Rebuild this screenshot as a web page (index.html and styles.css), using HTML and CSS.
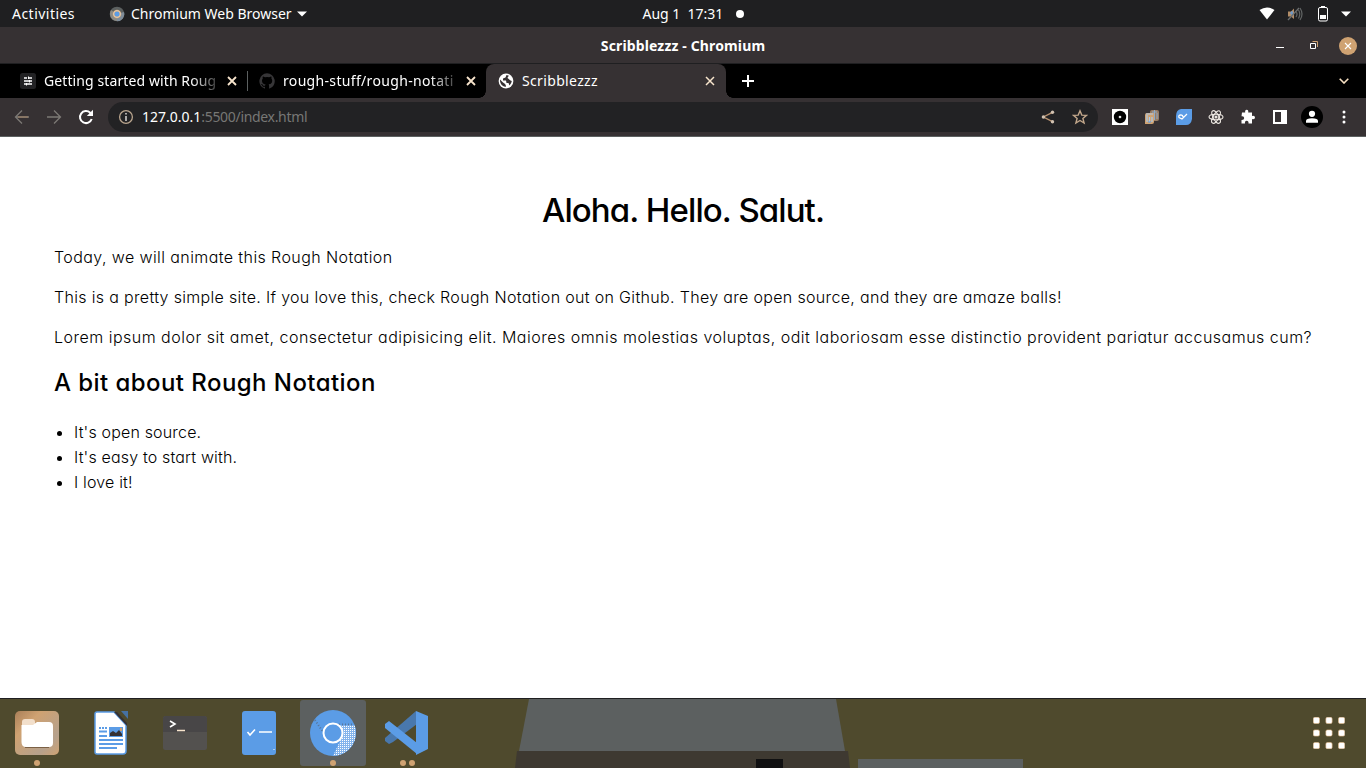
FILE: index.html
```html
<!DOCTYPE html>
<html lang="en">
<head>
<meta charset="utf-8">
<title>Scribblezzz</title>
<link rel="stylesheet" href="styles.css">
</head>
<body>
<div class="desktop">
  <header class="topbar">
    <div class="topbar-left">
      <span class="activities">Activities</span>
      <svg class="app-icon" width="16" height="16" viewBox="0 0 16 16"><circle cx="8" cy="8" r="7.3" fill="#5c6060"/><path d="M8 8L15 6A7.3 7.3 0 0 1 8 15.3Z" fill="#7e8c99"/><path d="M2 4L8 8V15A7.300 7.300 0 0 1 2 4Z" fill="#8d8b86"/><circle cx="8" cy="8" r="4.3" fill="#cfa272"/><circle cx="8" cy="8" r="2.6" fill="#5b9ce6"/><circle cx="8" cy="8" r="3.4" fill="none" stroke="#e3cfba" stroke-width="1"/></svg>
      <span class="app-name">Chromium Web Browser</span>
      <svg class="caret" width="10" height="6" viewBox="0 0 10 6"><path d="M0 .5H10L5 5.5Z" fill="#fff"/></svg>
    </div>
    <div class="clock"><span class="date">Aug 1</span><span class="time">17:31</span><i class="dot"></i></div>
    <div class="tray">
      <svg width="16" height="13" viewBox="0 0 16 13"><path d="M.5 3Q8-2 15.5 3L8 12.5Z" fill="#fff"/></svg>
      <svg class="mute" width="16" height="14" viewBox="0 0 16 14"><path d="M1 4.5H4L7 1.5V12L4 9.5H1Z" fill="#b28d68"/><path d="M3 6H6M5 4V9" stroke="#5b9ce6" stroke-width="1"/><path d="M1 13L12 1" stroke="#6c6f70" stroke-width="1.3"/><path d="M9 4.5Q11 7 9 10M11.5 3Q14 7 11.5 11.5M13 1Q17 7 13 13" fill="none" stroke="#626565" stroke-width="1.2"/></svg>
      <svg class="battery" width="10" height="16" viewBox="0 0 10 16"><path d="M3 0H7V2H3Z" fill="#fff"/><rect x=".5" y="1.5" width="9" height="13.5" rx="1.5" fill="none" stroke="#fff"/><rect x="2" y="9" width="6" height="4" fill="#fff"/></svg>
      <svg class="caret-tray" width="10" height="6" viewBox="0 0 10 6"><path d="M0 .5H10L5 5.5Z" fill="#fff"/></svg>
    </div>
  </header>

  <div class="titlebar">
    <span class="window-title">Scribblezzz - Chromium</span>
    <div class="window-controls">
      <i class="minimize"></i>
      <svg class="restore" width="8" height="9" viewBox="0 0 8 9"><path d="M.5 2.5H5.5V7.5H.5Z" fill="none" stroke="#fff"/><path d="M2.5 .5H7.5V6" fill="none" stroke="#cfa272"/></svg>
      <svg width="18" height="18" viewBox="0 0 18 18"><circle cx="9" cy="9" r="9" fill="#cfa272"/><path d="M6 6L12 12M12 6L6 12" stroke="#fff" stroke-width="1.1"/></svg>
    </div>
  </div>

  <nav class="tabs">
    <div class="tab tab-first">
      <svg class="favicon" width="16" height="16" viewBox="0 0 16 16"><rect width="16" height="16" rx="2.5" fill="#222224"/><path d="M4 5H7M8 5H12M4 8H9M10 8H12M4 11H6M7 11H12" stroke="#fff" stroke-width="1.5"/><path d="M8.500 3.500V6M9.500 7V9.500M6.500 10V12.500" stroke="#fff"/></svg>
      <span class="label label-rough">Getting started with Roug</span>
      <svg class="close" width="10" height="10" viewBox="0 0 10 10"><path d="M1 1L9 9M9 1L1 9" stroke="#f8e5cd" stroke-width="1.8"/></svg>
    </div>
    <div class="tab tab-second">
      <svg class="favicon" width="16" height="16" viewBox="0 0 16 16"><path fill="#363537" d="M8 .3a7.9 7.9 0 0 0-2.5 15.3c.4.1.5-.2.5-.4v-1.4c-2 .4-2.5-.5-2.7-1-.1-.2-.5-.9-.8-1.1-.3-.2-.7-.5 0-.6.6 0 1.1.6 1.3.8.7 1.2 1.8.9 2.3.7.1-.5.3-.9.5-1.1-1.8-.2-3.6-.9-3.6-3.9 0-.9.3-1.6.8-2.1-.1-.2-.4-1 .1-2.1 0 0 .7-.2 2.2.8a7.5 7.5 0 0 1 4 0c1.5-1 2.2-.8 2.2-.8.4 1.1.2 1.9.1 2.1.5.6.8 1.3.8 2.1 0 3.1-1.9 3.7-3.6 3.9.3.3.5.7.5 1.5v2.2c0 .2.1.5.5.4A7.9 7.9 0 0 0 8 .3Z"/></svg>
      <span class="label label-github">rough-stuff/rough-notati</span>
      <svg class="close" width="10" height="10" viewBox="0 0 10 10"><path d="M1 1L9 9M9 1L1 9" stroke="#f8e5cd" stroke-width="1.8"/></svg>
    </div>
    <div class="tab tab-active">
      <svg class="favicon globe" width="16" height="16" viewBox="0 0 16 16"><circle cx="8" cy="8" r="7.4" fill="#fff"/><path d="M8.5 2L11 2.7Q9.5 4 9.5 5L12.5 7.5 13.8 8Q13.5 10.5 11.5 12.5L10.5 10H8.5L8 7.5H5V5.5L7.5 4.5ZM2 6.5L5 9.5 6.5 10.5 7.8 12V14Q2.5 13 2 8Z" fill="#363133"/></svg>
      <span class="label label-active">Scribblezzz</span>
      <svg class="close" width="10" height="10" viewBox="0 0 10 10"><path d="M1 1L9 9M9 1L1 9" stroke="#f8e5cd" stroke-width="1.5"/></svg>
    </div>
    <svg class="new-tab" width="12" height="12" viewBox="0 0 12 12"><path d="M6 0V12M0 6H12" stroke="#fff" stroke-width="2"/></svg>
    <svg class="tab-search" width="10" height="6" viewBox="0 0 10 6"><path d="M.7 .7L5 5L9.3 .7" fill="none" stroke="#f8e0c2" stroke-width="1.6"/></svg>
  </nav>

  <div class="toolbar">
    <svg class="nav-icon" width="16" height="16" viewBox="0 0 16 16"><path d="M15 8H2M8 1.5L1.5 8L8 14.5" fill="none" stroke="#7c7975" stroke-width="1.3"/><path d="M4 8H14" stroke="#a58567"/></svg>
    <svg class="nav-icon forward" width="16" height="16" viewBox="0 0 16 16"><path d="M1 8H14M8 1.5L14.5 8L8 14.5" fill="none" stroke="#7c7975" stroke-width="1.3"/></svg>
    <svg class="nav-icon reload" width="16" height="16" viewBox="0 0 16 16"><path d="M13.7 10A6 6 0 1 1 12.2 3.8L13.5 5" fill="none" stroke="#fff" stroke-width="2"/><path d="M15 .8V7H8.8Z" fill="#fff"/></svg>
    <div class="omnibox">
      <svg width="16" height="16" viewBox="0 0 16 16"><circle cx="8" cy="8" r="6.4" fill="none" stroke="#b9a58e" stroke-width="1.3"/><path d="M8 7V12M8 4V5.6" stroke="#d9d6d2" stroke-width="1.5"/></svg>
      <span class="url"><span class="host">127.0.0.1</span><span class="path">:5500/index.html</span></span>
      <svg class="share" width="14" height="14" viewBox="0 0 14 14"><path d="M11.5 2.3L2.5 7L11.5 11.7" fill="none" stroke="#b99370" stroke-width="1.4"/><g fill="#d2c2b1"><circle cx="11.5" cy="2.3" r="1.7"/><circle cx="11.5" cy="11.7" r="1.7"/><circle cx="2.4" cy="7" r="1.7"/></g></svg>
      <svg class="star" width="16" height="16" viewBox="0 0 16 16"><path d="M8 1.8L9.8 6.1 14.5 6.4 10.9 9.4 12.1 14 8 11.5 3.9 14 5.1 9.4 1.5 6.4 6.2 6.1Z" fill="none" stroke="#c2a78b" stroke-width="1.4"/></svg>
    </div>
    <div class="extensions">
      <svg width="16" height="16" viewBox="0 0 16 16"><path d="M0 0H16V16H0Z" fill="#fff"/><circle cx="8" cy="8" r="6.2" fill="#000"/><circle cx="8" cy="8" r="1.300" fill="#fff"/><circle cx="8" cy="8" r=".4" fill="#000"/></svg>
      <svg width="16" height="16" viewBox="0 0 16 16"><path d="M6 3Q6 1 8 1H13Q15 1 15 3V10Q15 12 13 12H6Z" fill="#987c63"/><path d="M8 3H13M10.500 1V11M13 4V10" stroke="#8eaac7"/><path d="M1 6Q1 4 3 4H10V13Q10 15 8 15H1Z" fill="#cfa272"/><path d="M3 6V13M5.500 8V13M8 8V13M2 5H9" stroke="#a9c8e8" stroke-width="1.2" fill="none"/><path d="M4 13H7" stroke="#5b9ce6"/></svg>
      <svg width="16" height="16" viewBox="0 0 16 16"><path d="M5 0H16V10Q15 16 10 16H0V7Q0 1 5 0Z" fill="#5b9ce6"/><path d="M11 5L6 10L3 8.500Q2 6 5 5.8Q7 6 7 8" fill="none" stroke="#fff" stroke-width="1.2"/></svg>
      <svg width="16" height="16" viewBox="0 0 16 16" fill="none" stroke="#eee9e3" stroke-width="1.1"><ellipse cx="8" cy="8" rx="7" ry="2.8"/><ellipse cx="8" cy="8" rx="7" ry="2.8" transform="rotate(60 8 8)"/><ellipse cx="8" cy="8" rx="7" ry="2.8" transform="rotate(120 8 8)"/><circle cx="8" cy="8" r="1" fill="#fff"/></svg>
      <svg width="16" height="16" viewBox="0 0 16 16"><path d="M2 3.5H5.2Q4.7 .8 6.7.8T8.2 3.5H12V7Q15 6.3 15 8.5T12 10V14.5H8.5Q8.8 11.7 6.7 11.7T5 14.5H1.5V11Q4.2 11.2 4.2 9T1.5 7.2Z" fill="#fff"/></svg>
      <svg width="16" height="16" viewBox="0 0 16 16"><path d="M1 1H15V15H1Z" fill="#fff"/><path d="M3 3H9V13H3Z" fill="#363133"/></svg>
    </div>
    <svg class="profile" width="22" height="22" viewBox="0 0 22 22"><circle cx="11" cy="11" r="11" fill="#000"/><circle cx="11" cy="7.8" r="3.1" fill="#fff"/><path d="M5 16.7V15Q5 12.2 11 12.2T17 15V16.7Z" fill="#fff"/></svg>
    <svg class="menu" width="4" height="14" viewBox="0 0 4 14" fill="#fff"><circle cx="2" cy="2" r="1.5"/><circle cx="2" cy="7" r="1.5"/><circle cx="2" cy="12" r="1.5"/></svg>
  </div>

  <main class="page">
    <h1>Aloha. Hello. Salut.</h1>
    <p class="intro">Today, we will animate this Rough Notation</p>
    <p class="about">This is a pretty simple site. If you love this, check Rough Notation out on Github. They are open source, and they are amaze balls!</p>
    <p class="lorem">Lorem ipsum dolor sit amet, consectetur adipisicing elit. Maiores omnis molestias voluptas, odit laboriosam esse distinctio provident pariatur accusamus cum?</p>
    <h2>A bit about Rough Notation</h2>
    <ul>
      <li>It's open source.</li>
      <li>It's easy to start with.</li>
      <li>I love it!</li>
    </ul>
  </main>

  <footer class="dock">
    <svg class="wallpaper" width="1366" height="69" viewBox="0 0 1366 69"><path d="M529 0H820L836 0L845 52H519Z" fill="#5c6060"/><path d="M517 52H848L850 69H515Z" fill="#3e3931"/><path d="M756 60H783V69H756Z" fill="#101011"/><path d="M858 60H1023V69H858Z" fill="#5c6060"/></svg>
    <div class="launcher">
      <svg width="44" height="44" viewBox="0 0 44 44"><defs><linearGradient id="files" x1="0" y1="0" x2="1" y2="1"><stop offset="0" stop-color="#a97f58"/><stop offset=".3" stop-color="#cfa272"/><stop offset=".75" stop-color="#b6a18c"/><stop offset="1" stop-color="#cfa272"/></linearGradient></defs><rect width="44" height="44" rx="5" fill="url(#files)"/><path d="M7 11Q7 8 10 8H17Q20 8 20 11V14H7Z" fill="#f2dfcb"/><path d="M6.500 14H18L22 11H34Q38 11 38 15V32Q38 36 34 36H11Q6.500 36 6.500 31Z" fill="#fff"/><path d="M10 36.500H34" stroke="#7b6045"/></svg>
      <i class="running"></i>
    </div>
    <div class="launcher">
      <svg width="36" height="44" viewBox="0 0 36 44"><path d="M4 1H21L33 14V40Q33 43 30 43H4Q2 43 2 41V3Q2 1 4 1Z" fill="#fff" stroke="#5b9ce6" stroke-width="1.500"/><path d="M21 1L34 15V12L24 1Z" fill="#363133"/><path d="M28 0H35V8Z" fill="#4671a3"/><g stroke="#5b9ce6" stroke-width="2"><path d="M6 17H14" stroke-dasharray="2 1"/><path d="M6 20.500H14M6 25H14M6 29H30M6 33H30M6 37H24"/></g><path d="M16 16H30V26H16Z" fill="#5b9ce6"/><path d="M17 25V22L20 20L23 22L26 19L29 23V25Z" fill="#363133"/><path d="M27 17H29V20H27Z" fill="#cfa272"/></svg>
    </div>
    <div class="launcher">
      <svg width="46" height="36" viewBox="0 0 46 36"><rect x="1" y="1" width="44" height="34" rx="2.500" fill="#53514f"/><path d="M1 4Q1 1 4 1H42Q45 1 45 4V17H1Z" fill="#484647"/><path d="M8 6L13 9L8 12" fill="none" stroke="#fff" stroke-width="1.600"/><path d="M15 15.500H23" stroke="#f8e5cd" stroke-width="1.500"/></svg>
    </div>
    <div class="launcher">
      <svg width="34" height="44" viewBox="0 0 34 44"><rect width="34" height="44" rx="3" fill="#5b9ce6"/><path d="M5.500 21L8 24L13 18.500M17 21H30" fill="none" stroke="#fff" stroke-width="1.600"/><path d="M32 38V39" stroke="#fff"/></svg>
    </div>
    <div class="launcher focused">
      <svg width="46" height="46" viewBox="0 0 46 46"><defs><pattern id="grain" width="2" height="2" patternUnits="userSpaceOnUse"><path d="M0 0H1V1H0Z" fill="#fff"/></pattern></defs><circle cx="23" cy="23" r="23" fill="#5b9ce6"/><path d="M23 15H44.500A23 23 0 0 1 23 46L31 29A10 10 0 0 0 29 15Z" fill="#84b4ec"/><path d="M23 15H44.500A23 23 0 0 1 23 46L31 29A10 10 0 0 0 29 15Z" fill="url(#grain)"/><path d="M5 10L13 22M23 14.500H44" stroke="#58779c" stroke-width="2" stroke-dasharray="1 2"/><circle cx="23" cy="23" r="9.500" fill="#5b9ce6" stroke="#fff" stroke-width="2"/></svg>
      <i class="running"></i>
    </div>
    <div class="launcher">
      <svg width="46" height="46" viewBox="0 0 46 46"><path d="M32 1L1 28V31L5 34L9 32L33 14Z" fill="#4978ad"/><path d="M1 14L5 11L33 33V44L1 18Z" fill="#5b9ce6"/><path d="M32 1L44 6V39L32 45V1Z" fill="#5b9ce6"/></svg>
      <i class="running left"></i><i class="running right"></i>
    </div>
    <svg class="apps" width="32" height="32" viewBox="0 0 32 32"><g fill="#fff" stroke="#e5bd91" stroke-width=".6"><rect x=".3" y=".3" width="6.200" height="6.200" rx="1.500"/><rect x="12.900" y=".3" width="6.200" height="6.200" rx="1.500"/><rect x="25.500" y=".3" width="6.200" height="6.200" rx="1.500"/><rect x=".3" y="12.900" width="6.200" height="6.200" rx="1.500"/><rect x="12.900" y="12.900" width="6.200" height="6.200" rx="1.500"/><rect x="25.500" y="12.900" width="6.200" height="6.200" rx="1.500"/><rect x=".3" y="25.500" width="6.200" height="6.200" rx="1.500"/><rect x="12.900" y="25.500" width="6.200" height="6.200" rx="1.500"/><rect x="25.500" y="25.500" width="6.200" height="6.200" rx="1.500"/></g></svg>
  </footer>
</div>
</body>
</html>
```
FILE: styles.css
```css
* { box-sizing: border-box; }
body { margin: 0; background: #fff; }
svg { display: block; flex: none; }
.desktop { width: 1366px; height: 768px; display: flex; flex-direction: column; overflow: hidden; font-family: "Noto Sans", "Open Sans", sans-serif; font-size: 14px; color: #fff; white-space: nowrap; }

.topbar { height: 27px; flex: none; background: #1f1f21; display: grid; grid-template-columns: 1fr auto 1fr; align-items: center; line-height: 27px; }
.topbar-left { display: flex; align-items: center; padding-left: 12px; }
.activities { width: 97px; letter-spacing: .47px; }
.app-icon { margin-right: 6px; }
.app-name { width: 161px; margin-right: 5px; }
.clock { display: flex; align-items: center; width: 102px; margin-left: 21px; }
.date { width: 45px; }
.time { width: 48px; }
.dot { width: 8px; height: 8px; border-radius: 50%; background: #fff; }
.tray { display: flex; align-items: center; justify-content: flex-end; padding-right: 15px; }
.mute { margin-left: 12px; }
.battery { margin-left: 15px; }
.caret-tray { margin-left: 13px; }

.titlebar { height: 37px; flex: none; background: #363133; border-bottom: 1px solid #1f1f21; display: grid; grid-template-columns: 1fr; align-items: center; }
.window-title { grid-area: 1 / 1; justify-self: center; font-weight: 700; line-height: 36px; letter-spacing: .14px; padding-top: 1px; }
.window-controls { grid-area: 1 / 1; justify-self: end; display: flex; align-items: center; padding-right: 9px; }
.minimize { width: 8px; height: 1px; background: #fff; margin: 4px 26px 0 0; }
.restore { margin-right: 21px; }

.tabs { height: 34px; flex: none; background: #000; display: flex; align-items: center; }
.tab { display: flex; align-items: center; height: 34px; line-height: 34px; }
.tab-first { width: 247px; padding-left: 20px; }
.tab-second { width: 239px; padding-left: 12px; background: linear-gradient(#5c6060, #5c6060) 0 50% / 1px 20px no-repeat; }
.tab-active { position: relative; width: 240px; padding-left: 12px; background: #363133; border-radius: 8px 8px 0 0; }
.tab-active::before, .tab-active::after { content: ""; position: absolute; bottom: 0; width: 7px; height: 7px; }
.tab-active::before { right: 100%; background: radial-gradient(circle at 0 0, transparent 6.5px, #363133 7px); }
.tab-active::after { left: 100%; background: radial-gradient(circle at 100% 0, transparent 6.5px, #363133 7px); }
.favicon { margin-right: 8px; }
.label { width: 175px; }
.label-rough, .label-github { -webkit-mask-image: linear-gradient(90deg, #000 84%, rgba(0,0,0,.15) 100%); mask-image: linear-gradient(90deg, #000 84%, rgba(0,0,0,.15) 100%); }
.label-rough { letter-spacing: .1px; }
.label-github { letter-spacing: .33px; }
.label-active { letter-spacing: .35px; }
.close { margin-left: 8px; }
.new-tab { margin-left: 16px; }
.tab-search { margin: 0 17px 0 auto; }

.toolbar { height: 39px; flex: none; background: #363133; border-bottom: 1px solid #5c6060; display: flex; align-items: center; padding-left: 14px; }
.nav-icon { margin-right: 16px; }
.reload { margin-right: 14px; }
.omnibox { width: 990px; height: 30px; border-radius: 15px; background: #222224; display: flex; align-items: center; padding: 0 10px; line-height: 30px; }
.url { margin-left: 8px; }
.path { color: #777775; letter-spacing: -.32px; }
.share { margin-left: auto; }
.star { margin-left: 17px; }
.extensions { display: flex; gap: 16px; margin-left: 14px; }
.profile { margin-left: 13px; }
.menu { margin-left: 19px; }

.page { height: 561px; flex: none; background: #fff; color: #000; padding: 48px 54px 0; font-family: Inter, "Open Sans", sans-serif; font-weight: 300; font-feature-settings: "cv11"; font-size: 16px; line-height: 25px; }
.page h1 { margin: 0 0 10px; font-size: 33px; line-height: 50px; font-weight: 500; text-align: center; letter-spacing: -.92px; }
.page p { margin: 0 0 15px; }
.page .intro { letter-spacing: .41px; }
.page .about { letter-spacing: .33px; }
.page .lorem { letter-spacing: .49px; }
.page h2 { margin: 0 0 20px; font-size: 24px; line-height: 35px; font-weight: 500; letter-spacing: .44px; }
.page ul { margin: 0; padding-left: 20px; letter-spacing: .17px; }

.dock { height: 70px; flex: none; background: #4f4a2d; border-top: 1px solid #1f1f21; position: relative; display: flex; align-items: center; padding: 0 0 2px 4px; }
.wallpaper { position: absolute; left: 0; top: 0; }
.launcher { position: relative; width: 66px; height: 66px; margin-right: 8px; display: flex; align-items: center; justify-content: center; border-radius: 3px; }
.focused { background: #5c6060; }
.running { position: absolute; left: 30px; bottom: 0; width: 6px; height: 6px; border-radius: 50%; background: #cfa272; }
.left { left: 26px; }
.right { left: 35px; }
.apps { margin: 0 21px 0 auto; position: relative; }
```
